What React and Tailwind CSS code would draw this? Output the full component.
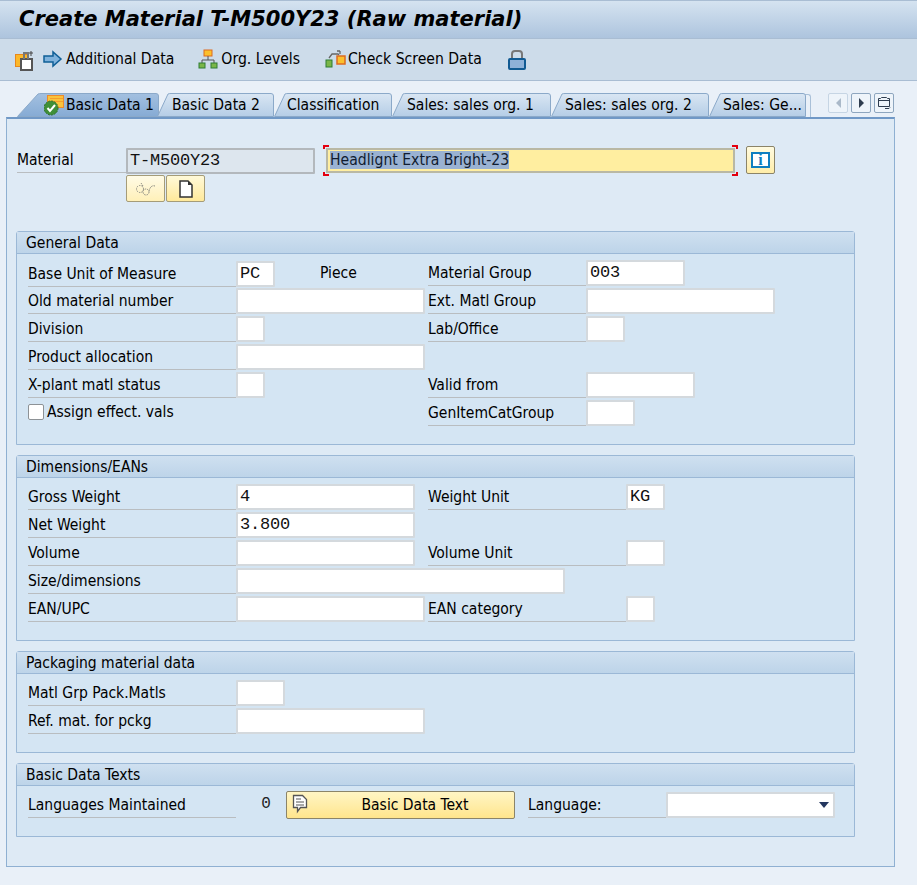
import React from "react";

const SANS = "font-['DejaVu_Sans_Condensed','DejaVu_Sans',sans-serif]";
const MONO = "font-['Liberation_Mono',monospace]";

const TABS = [
  { label: "Basic Data 1", w: 143, slant: 21, active: true, pl: 49 },
  { label: "Basic Data 2", w: 118, slant: 11, pl: 15 },
  { label: "Classification", w: 119, slant: 11, pl: 13 },
  { label: "Sales: sales org. 1", w: 160, slant: 11, pl: 15 },
  { label: "Sales: sales org. 2", w: 159, slant: 11, pl: 14 },
  { label: "Sales: Ge...", w: 98, slant: 11, pl: 14 },
];

const TabShape = ({ w, slant, active }) => (
  <svg width={w} height="24" className="absolute left-0 top-0">
    <defs>
      <linearGradient id={active ? "tabOn" : "tabOff"} x1="0" y1="0" x2="0" y2="1">
        <stop offset="0" stopColor={active ? "#a3c0e0" : "#d9e6f3"} />
        <stop offset="1" stopColor={active ? "#86abd4" : "#b5cde6"} />
      </linearGradient>
    </defs>
    <path
      d={`M0.5 23.5 L${slant} 1 Q${slant + 1} 0.5 ${slant + 3} 0.5 L${w - 4} 0.5 Q${w - 1.5} 0.5 ${w - 1.5} 3 L${w - 1.5} 23.5 Z`}
      fill={`url(#${active ? "tabOn" : "tabOff"})`}
      stroke="#8ba9c9"
    />
  </svg>
);

const AdditionalIcon = () => (
  <svg width="20" height="22" viewBox="0 0 20 22">
    <rect x="1.5" y="5.5" width="12" height="12" fill="#fbb829" stroke="#e8871b" />
    <rect x="7" y="10" width="11" height="11" fill="#fff" stroke="#555" strokeWidth="2" />
    <path d="M9 3h6v7h-2V5h-2v5H9z" fill="#777" />
    <path d="M17 2v5M15 4h4" stroke="#444" />
  </svg>
);

const ArrowIcon = () => (
  <svg width="20" height="18" viewBox="0 0 20 18">
    <path d="M1 6h9V2l8 7-8 7v-4H1z" fill="#7fb2dc" stroke="#0f5f97" strokeWidth="1.5" />
  </svg>
);

const OrgIcon = () => (
  <svg width="20" height="20" viewBox="0 0 20 20">
    <rect x="6" y="1" width="8" height="6" fill="#fbc02d" stroke="#dd6b20" />
    <path d="M10 7v4M4 14v-3h12v3" fill="none" stroke="#555" />
    <rect x="1" y="14" width="6" height="5" fill="#7ab648" stroke="#2f7d32" />
    <rect x="13" y="14" width="6" height="5" fill="#7ab648" stroke="#2f7d32" />
  </svg>
);

const CheckIcon = () => (
  <svg width="22" height="20" viewBox="0 0 22 20">
    <rect x="1" y="11" width="6" height="7" fill="#7ab648" stroke="#2f7d32" />
    <rect x="12" y="7" width="8" height="8" fill="#fbc02d" stroke="#dd6b20" strokeWidth="1.5" />
    <path d="M4 9l3-4h6l1 1M15 2v3M12 2h3" fill="none" stroke="#666" strokeWidth="1.3" />
  </svg>
);

const LockIcon = () => (
  <svg width="20" height="22" viewBox="0 0 20 22">
    <path d="M5 10V5q0-3 3-3h4q3 0 3 3v5" fill="none" stroke="#777" strokeWidth="2" />
    <rect x="2" y="10" width="16" height="10" rx="1" fill="#8eb1d8" stroke="#115a92" strokeWidth="2" />
  </svg>
);

const ToolItem = ({ icon, label, className }) => (
  <div className={`flex items-center ${className}`}>
    {icon}
    <span className="text-[15.6px] text-black">{label}</span>
  </div>
);

const Input = ({ w, value, disabled }) => (
  <div
    className={`h-[26px] border-2 ${MONO} pl-[2px] text-[17px] leading-[21px] tracking-[-0.2px] rounded-[1px] text-[#111] ${
      disabled ? "border-[#b3b8bc] bg-[#dde6ee]" : "border-[#d4d9dd] bg-white"
    }`}
    style={{ width: w }}
  >
    {value}
  </div>
);

const Field = ({ label, labelW, inputW, value }) => (
  <div className="flex h-[28px] items-end">
    <div
      className="h-[27px] border-b border-[#b9bdc0] text-[15.5px] leading-[28px] text-black"
      style={{ width: labelW }}
    >
      {label}
    </div>
    {inputW && <Input w={inputW} value={value} />}
  </div>
);

const Row = ({ left, right }) => (
  <div className="flex h-[28px]">
    <div className="w-[400px] shrink-0">{left}</div>
    <div>{right}</div>
  </div>
);

const Group = ({ title, h, children }) => (
  <section
    className="mb-[10px] w-[839px] rounded-t-[3px] border border-[#9bb8d6] bg-[#d4e5f3]"
    style={{ height: h }}
  >
    <div className="h-[22px] border-b border-[#9bb8d6] bg-gradient-to-b from-[#cfe0f0] to-[#bdd4e9] pl-[9px] text-[15.5px] leading-[23px] text-black">
      {title}
    </div>
    <div className="pl-[11px] pt-[4px]">{children}</div>
  </section>
);

const YellowButton = ({ children, bright }) => (
  <div
    className={`flex h-[27px] w-[39px] items-center justify-center rounded-[2px] border border-[#a59c78] ${
      bright
        ? "bg-gradient-to-b from-[#fff9d8] to-[#ffe99a]"
        : "bg-gradient-to-b from-[#fffbe6] to-[#fff0b8]"
    }`}
  >
    {children}
  </div>
);

const Corner = ({ className }) => <span className={`absolute h-[4px] w-[6px] border-[#e3000f] ${className}`} />;

const NavButton = ({ children, dim }) => (
  <div
    className={`flex h-[20px] w-[20px] items-center justify-center rounded-[2px] border bg-[#eef4fa] ${
      dim ? "border-[#c6d5e4]" : "border-[#8ea6bf]"
    }`}
  >
    {children}
  </div>
);

export default function App() {
  return (
    <div className={`flex h-[885px] w-[917px] flex-col overflow-hidden bg-[#e9f0f8] ${SANS}`}>
      {/* title */}
      <header className="h-[39px] shrink-0 border-y border-[#a9bdd3] bg-gradient-to-b from-[#d5e3f0] to-[#adc4de] pl-[19px] font-['DejaVu_Sans',sans-serif] text-[21px] font-bold italic leading-[37px] text-black">
        Create Material T-M500Y23 (Raw material)
      </header>

      {/* toolbar */}
      <div className="flex h-[42px] shrink-0 items-center border-b border-[#a9bdd3] bg-[#cddcea] pl-[14px]">
        <AdditionalIcon />
        <ToolItem className="ml-[9px] gap-[3px]" icon={<ArrowIcon />} label="Additional Data" />
        <ToolItem className="ml-[24px] gap-[3px]" icon={<OrgIcon />} label="Org. Levels" />
        <ToolItem className="ml-[25px] gap-[1px]" icon={<CheckIcon />} label="Check Screen Data" />
        <div className="ml-[25px]">
          <LockIcon />
        </div>
      </div>

      {/* tab strip */}
      <div className="ml-[17px] mt-[12px] flex h-[24px] shrink-0 items-start">
        {TABS.map((t) => (
          <div key={t.label} className="relative h-[24px] shrink-0" style={{ width: t.w, marginRight: t.active ? -3 : -1 }}>
            <TabShape w={t.w} slant={t.slant} active={t.active} />
            {t.active && (
              <svg width="24" height="24" viewBox="0 0 24 24" className="absolute left-[27px] top-0">
                <rect x="3.5" y="2.5" width="16" height="12" fill="#f9c33c" stroke="#ec8b2c" />
                <path d="M6 5.5h13M6 8.5h13" stroke="#f59e2c" />
                <circle cx="7" cy="15" r="7" fill="#3f8f38" stroke="#2e6e2b" strokeDasharray="2 1" />
                <path d="M3.5 15l2.5 3 5-6" fill="none" stroke="#fff" strokeWidth="2" />
              </svg>
            )}
            <span
              className="absolute top-0 whitespace-nowrap text-[15.5px] leading-[24px] text-black"
              style={{ left: t.pl }}
            >
              {t.label}
            </span>
          </div>
        ))}
        <div className="ml-[-1px] mt-[1px] h-[23px] w-[6px] rounded-tr-[3px] border-r border-t border-[#a9c0d8]" />
        <div className="ml-[17px] flex gap-[3px]">
          <NavButton dim>
            <span className="h-0 w-0 border-y-[5px] border-r-[5px] border-y-transparent border-r-[#aab9c9]" />
          </NavButton>
          <NavButton>
            <span className="h-0 w-0 border-y-[5px] border-l-[5px] border-y-transparent border-l-[#2f3d4f]" />
          </NavButton>
          <NavButton>
            <svg width="14" height="14" viewBox="0 0 14 14" fill="none" stroke="#2f3d4f">
              <path d="M1.5 10.5v-8h2l1-1h5l1 1h2v8z" />
              <path d="M1.5 4.5h11" />
              <path d="M8 12.5h4l1-1" />
            </svg>
          </NavButton>
        </div>
      </div>

      {/* main panel */}
      <main className="ml-[6px] h-[750px] w-[889px] shrink-0 border border-t-2 border-[#8fb0d2] border-t-[#7098c6] bg-[#deeaf5] pl-[9px]">
        {/* material header */}
        <div className="flex h-[112px] flex-col pt-[29px]">
          <div className="flex h-[27px]">
            <div className="ml-[1px] h-[25px] w-[109px] border-b border-[#b9bdc0] text-[15.5px] leading-[25px] text-black">Material</div>
            <Input w={189} value="T-M500Y23" disabled />
            <div className="relative ml-[11px] h-[25px] w-[409px] border-2 border-[#b9b8a4] bg-[#ffeea0] pl-[2px] text-[15.6px] leading-[20px]">
              <span className="bg-[#9ab2d2] text-[#101c30]">Headlignt Extra Bright-23</span>
              <Corner className="-left-[5px] -top-[5px] border-l-2 border-t-2" />
              <Corner className="-bottom-[5px] -left-[5px] border-b-2 border-l-2" />
              <Corner className="-right-[5px] -top-[5px] border-r-2 border-t-2" />
              <Corner className="-bottom-[5px] -right-[5px] border-b-2 border-r-2" />
            </div>
            <div className="-mt-[2px] ml-[11px] flex h-[28px] w-[29px] items-center justify-center rounded-[2px] border border-[#8b8468] bg-gradient-to-b from-[#fffbe0] to-[#ffeda8]">
              <div className="flex h-[16px] w-[19px] items-center justify-center border-2 border-[#0f7fc0] bg-white font-['Liberation_Serif',serif] text-[16px] font-bold leading-none text-[#0f7fc0]">
                i
              </div>
            </div>
          </div>
          <div className="ml-[110px] flex gap-[1px]">
            <YellowButton>
              <svg width="22" height="16" viewBox="0 0 22 16" fill="none" stroke="#8a8a80">
                <circle cx="5" cy="8" r="3.5" strokeDasharray="1.5 1" />
                <circle cx="11" cy="11" r="3" strokeDasharray="1.5 1" />
                <path d="M8 5l-2-3M14 10c1-4 3-6 6-5" strokeDasharray="1.5 1" />
              </svg>
            </YellowButton>
            <YellowButton bright>
              <svg width="14" height="18" viewBox="0 0 14 18">
                <path d="M1 1h8l4 4v12H1z" fill="#fff" stroke="#333" strokeWidth="1.5" />
                <path d="M9 1v4h4z" fill="#333" />
              </svg>
            </YellowButton>
          </div>
        </div>

        <Group title="General Data" h={214}>
          <Row
            left={
              <div className="flex items-center">
                <Field label="Base Unit of Measure" labelW={208} inputW={39} value="PC" />
                <span className="ml-[45px] text-[15.5px] leading-[30px] text-black">Piece</span>
              </div>
            }
            right={<Field label="Material Group" labelW={158} inputW={99} value="003" />}
          />
          <Row
            left={<Field label="Old material number" labelW={208} inputW={189} />}
            right={<Field label="Ext. Matl Group" labelW={158} inputW={189} />}
          />
          <Row
            left={<Field label="Division" labelW={208} inputW={29} />}
            right={<Field label="Lab/Office" labelW={158} inputW={39} />}
          />
          <Row left={<Field label="Product allocation" labelW={208} inputW={189} />} />
          <Row
            left={<Field label="X-plant matl status" labelW={208} inputW={29} />}
            right={<Field label="Valid from" labelW={158} inputW={109} />}
          />
          <Row
            left={
              <div className="flex h-[28px] items-center gap-[3px]">
                <span className="h-[16px] w-[16px] rounded-[2px] border border-[#8d9296] bg-white" />
                <span className="pt-[2px] text-[15.5px] text-black">Assign effect. vals</span>
              </div>
            }
            right={<Field label="GenItemCatGroup" labelW={158} inputW={49} />}
          />
        </Group>

        <Group title="Dimensions/EANs" h={186}>
          <Row
            left={<Field label="Gross Weight" labelW={208} inputW={179} value="4" />}
            right={<Field label="Weight Unit" labelW={198} inputW={39} value="KG" />}
          />
          <Row left={<Field label="Net Weight" labelW={208} inputW={179} value="3.800" />} />
          <Row
            left={<Field label="Volume" labelW={208} inputW={179} />}
            right={<Field label="Volume Unit" labelW={198} inputW={39} />}
          />
          <div className="h-[28px]">
            <Field label="Size/dimensions" labelW={208} inputW={329} />
          </div>
          <Row
            left={<Field label="EAN/UPC" labelW={208} inputW={189} />}
            right={<Field label="EAN category" labelW={198} inputW={29} />}
          />
        </Group>

        <Group title="Packaging material data" h={102}>
          <Field label="Matl Grp Pack.Matls" labelW={208} inputW={49} />
          <Field label="Ref. mat. for pckg" labelW={208} inputW={189} />
        </Group>

        <Group title="Basic Data Texts" h={74}>
          <div className="flex h-[28px] items-end">
            <Field label="Languages Maintained" labelW={208} />
            <span className={`w-[50px] pl-[10px] text-center ${MONO} text-[16px] leading-[27px] text-[#222]`}>0</span>
            <div className="relative mb-[-1px] h-[28px] w-[229px] rounded-[2px] border border-[#8b8468] bg-gradient-to-b from-[#fff5c4] to-[#ffe58c] pl-[29px] text-center text-[15.5px] leading-[26px] text-black">
              <svg width="16" height="20" viewBox="0 0 16 20" className="absolute left-[5px] top-[2px]">
                <path d="M1.5 1.5h9l4 4v8h-6l-3 4v-4h-4z" fill="#fff" stroke="#555" strokeWidth="1.3" />
                <path d="M4 5h5M4 8h8M4 11h8" stroke="#555" />
              </svg>
              Basic Data Text
            </div>
            <div className="ml-[13px]">
              <Field label="Language:" labelW={138} />
            </div>
            <div className="relative">
              <Input w={169} />
              <span className="absolute right-[6px] top-[10px] h-0 w-0 border-x-[5px] border-t-[6px] border-x-transparent border-t-[#24375f]" />
            </div>
          </div>
        </Group>
      </main>
    </div>
  );
}
